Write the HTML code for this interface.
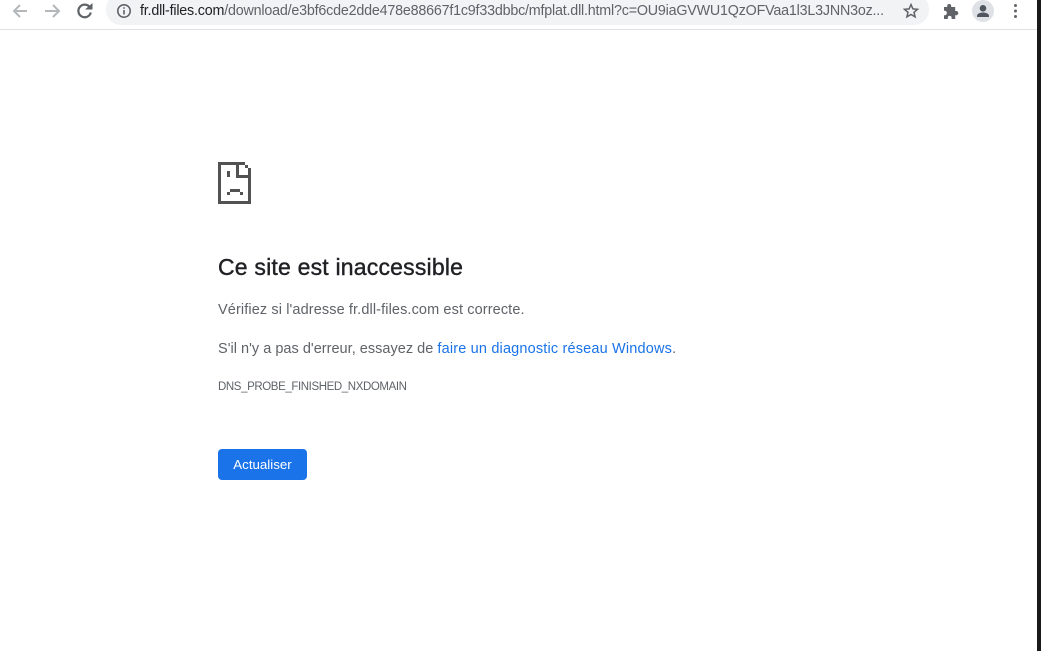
<!DOCTYPE html>
<html><head><meta charset="utf-8"><style>
html,body{margin:0;padding:0;width:1041px;height:651px;overflow:hidden;background:#fff;font-family:"Liberation Sans",sans-serif}
.a{position:absolute;white-space:nowrap}
.p{position:absolute;background:#525252}
</style></head><body>
<div class="a" style="left:0;top:29px;width:1037px;height:1px;background:#dfe1e5"></div>
<div class="a" style="left:1037px;top:0;width:4px;height:651px;background:#1a1a1a"></div>
<div class="a" style="left:106px;top:-6px;width:823px;height:31px;border-radius:15px;background:#f1f3f4"></div>

<svg class="a" style="left:0;top:0" width="110" height="26" fill="none">
<path d="M27 11H14.5M20 5l-6 6 6 6" stroke="#b5b8bb" stroke-width="2"/>
<path d="M45 11h13M53 5l6 6-6 6" stroke="#b5b8bb" stroke-width="2"/>
<path d="M90 7.500a6.300 6.300 0 1 0 .8 5" stroke="#5f6368" stroke-width="2.200"/>
<path d="M85 9.500h7.500V3z" fill="#5f6368"/>
</svg>
<svg class="a" style="left:116px;top:3px" width="16" height="16" fill="none">
<circle cx="8" cy="8" r="6.200" stroke="#5f6368" stroke-width="1.600"/>
<path d="M8 7v4.500M8 4.200v1.600" stroke="#5f6368" stroke-width="1.600"/>
</svg>
<div class="a" style="left:140px;top:2px;font-size:14.3px;line-height:18px;color:#5f6368;letter-spacing:-.2px;width:750px;overflow:hidden"><span style="color:#202124">fr.dll-files.com</span>/download/e3bf6cde2dde478e88667f1c9f33dbbc/mfplat.dll.html?c=OU9iaGVWU1QzOFVaa1l3L3JNN3oz...</div>

<svg class="a" style="left:900px;top:0" width="125" height="26" fill="none">
<path d="M11 4.600l1.900 4.300 4.600.4-3.500 3 1.100 4.600-4.100-2.400-4.100 2.400 1.100-4.600-3.500-3 4.600-.4z" stroke="#5f6368" stroke-width="1.500"/>
<path d="M44 7h3.200V6a2 2 0 0 1 4 0v1h4v4h1a2.100 2.100 0 0 1 0 4.200h-1v3.800h-3.600v-1.200a1.900 1.900 0 0 0-3.800 0v1.200H44v-3.800h1.200a2.300 2.300 0 0 0 0-4.400H44z" fill="#5f6368"/>
<circle cx="83" cy="11" r="11" fill="#dee1e6"/>
<circle cx="83" cy="8.300" r="3.300" fill="#4f5660"/>
<path d="M77 17v-1.200c0-2.300 3.600-3.300 6-3.300s6 1 6 3.300V17z" fill="#4f5660"/>
<circle cx="115.500" cy="5.500" r="1.500" fill="#5f6368"/>
<circle cx="115.500" cy="11" r="1.500" fill="#5f6368"/>
<circle cx="115.500" cy="16.500" r="1.500" fill="#5f6368"/>
</svg>

<div class="p" style="left:218px;top:162px;width:3px;height:42px"></div>
<div class="p" style="left:218px;top:162px;width:27px;height:3px"></div>
<div class="p" style="left:218px;top:201px;width:33px;height:3px"></div>
<div class="p" style="left:248px;top:168px;width:3px;height:36px"></div>
<div class="p" style="left:245px;top:165px;width:3px;height:3px"></div>
<div class="p" style="left:236px;top:162px;width:3px;height:16px"></div>
<div class="p" style="left:236px;top:175px;width:15px;height:3px"></div>
<div class="p" style="left:227px;top:171px;width:3px;height:6px"></div>
<div class="p" style="left:230px;top:189px;width:10px;height:3px"></div>
<div class="p" style="left:227px;top:192px;width:3px;height:3px"></div>
<div class="p" style="left:240px;top:192px;width:3px;height:3px"></div>

<div class="a" style="left:218px;top:252px;font-size:23px;line-height:30px;color:#202124;letter-spacing:.2px;-webkit-text-stroke:.4px #202124">Ce site est inaccessible</div>
<div class="a" style="left:218px;top:301px;font-size:14.5px;line-height:18px;color:#5f6368;letter-spacing:.11px">Vérifiez si l'adresse fr.dll-files.com est correcte.</div>
<div class="a" style="left:218px;top:340px;font-size:14.5px;line-height:18px;color:#5f6368;letter-spacing:.02px">S'il n'y a pas d'erreur, essayez de <span style="color:#1a73e8;letter-spacing:.17px">faire un diagnostic réseau Windows</span>.</div>
<div class="a" style="left:218px;top:380px;font-size:11.5px;line-height:15px;color:#5f6368;letter-spacing:-.4px">DNS_PROBE_FINISHED_NXDOMAIN</div>
<div class="a" style="left:218px;top:449px;width:89px;height:31px;border-radius:4px;background:#1a73e8;color:#fff;font-size:13.3px;line-height:31px;text-align:center">Actualiser</div>
</body></html>
